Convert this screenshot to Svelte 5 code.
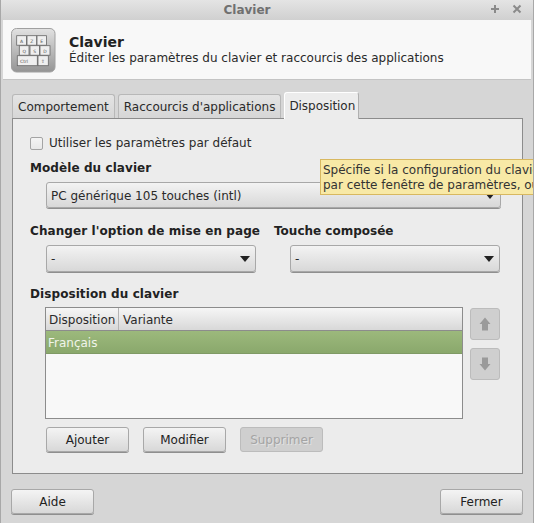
<script>
  const tabs = [
    { label: 'Comportement', active: false },
    { label: "Raccourcis d'applications", active: false },
    { label: 'Disposition', active: true }
  ];
</script>

<div class="window">
  <div class="titlebar">
    <span class="title">Clavier</span>
    <div class="wm">
      <svg width="10" height="10" viewBox="0 0 10 10"><path d="M5 1v8M1 5h8" stroke="#8a8a8a" stroke-width="2"/></svg>
      <svg width="10" height="10" viewBox="0 0 10 10"><path d="M1.5 1.5l7 7M8.5 1.5l-7 7" stroke="#8a8a8a" stroke-width="2"/></svg>
    </div>
  </div>

  <div class="content">
    <header class="banner">
      <svg class="kbd" width="45" height="45" viewBox="0 0 45 45">
        <defs>
          <linearGradient id="kb" x1="0" y1="0" x2="0" y2="1">
            <stop offset="0" stop-color="#e2e2e2"/><stop offset="1" stop-color="#949494"/>
          </linearGradient>
        </defs>
        <rect x="0.5" y="0.5" width="43.500" height="43.500" rx="5" fill="url(#kb)" stroke="#a0a0a0"/>
        <g fill="#efefef" stroke="#666" stroke-width="0.8">
          <rect x="5.700" y="7.700" width="9.700" height="9.500"/><rect x="16" y="7.700" width="9.700" height="9.500"/><rect x="26" y="7.700" width="9.500" height="9.500"/>
          <rect x="8.300" y="17.700" width="9.700" height="9.500"/><rect x="19" y="17.700" width="9.500" height="9.500"/><rect x="29" y="17.700" width="10" height="9.500"/>
          <rect x="6.300" y="27.700" width="20" height="10"/><rect x="27" y="27.700" width="10.300" height="10"/>
        </g>
        <g font-family="DejaVu Sans" font-size="4.500" fill="#555" text-anchor="middle">
          <text x="10.500" y="14.500">A</text><text x="20.800" y="14.500">Z</text><text x="30.700" y="14.500">E</text>
          <text x="13.200" y="24.500">Q</text><text x="23.700" y="24.500">S</text><text x="34" y="24.500">D</text>
          <text x="13" y="34.500">Ctrl</text><text x="32" y="34.500">⇧</text>
        </g>
      </svg>
      <div class="banner-text">
        <div class="banner-title">Clavier</div>
        <div class="banner-sub">Éditer les paramètres du clavier et raccourcis des applications</div>
      </div>
    </header>

    <div class="body">
      <div class="tabs">
        {#each tabs as t}
          <div class="tab" class:active={t.active}>{t.label}</div>
        {/each}
      </div>

      <section class="panel">
        <label class="check"><span class="box"></span>Utiliser les paramètres par défaut</label>

        <div class="heading h-model">Modèle du clavier</div>
        <div class="combo full">
          <span>PC générique 105 touches (intl)</span><i class="arrow"></i>
        </div>

        <div class="two">
          <div class="heading">Changer l'option de mise en page</div>
          <div class="heading touche">Touche composée</div>
          <div class="combo c1"><span>-</span><i class="arrow"></i></div>
          <div class="combo c2"><span>-</span><i class="arrow"></i></div>
        </div>

        <div class="heading h-layout">Disposition du clavier</div>
        <div class="layout-row">
          <div class="tree">
            <div class="thead">
              <div class="th first">Disposition</div>
              <div class="th">Variante</div>
            </div>
            <div class="selected">Français</div>
          </div>
          <div class="arrows">
            <button class="btn iconbtn" disabled aria-label="Monter">
              <svg width="16" height="16" viewBox="0 0 16 16"><path d="M8 1.500l5.500 6.500H11v6.500H5V8H2.500z" fill="#9a9a9a"/></svg>
            </button>
            <button class="btn iconbtn" disabled aria-label="Descendre">
              <svg width="16" height="16" viewBox="0 0 16 16"><path d="M8 14.500l5.500-6.500H11V1.500H5V8H2.500z" fill="#9a9a9a"/></svg>
            </button>
          </div>
        </div>

        <div class="actions">
          <button class="btn">Ajouter</button>
          <button class="btn">Modifier</button>
          <button class="btn" disabled>Supprimer</button>
        </div>
      </section>

      <footer class="footer">
        <button class="btn">Aide</button>
        <button class="btn">Fermer</button>
      </footer>
    </div>
  </div>

  <div class="tooltip">Spécifie si la configuration du clavier sera gérée<br>par cette fenêtre de paramètres, ou</div>
</div>

<style>
  :global(body) { margin: 0; }
  .window {
    position: relative;
    width: 534px;
    height: 523px;
    overflow: hidden;
    box-sizing: border-box;
    background: #d6d6d6;
    font-family: "DejaVu Sans", sans-serif;
    font-size: 12px;
    color: #2a2a2a;
    border-left: 1px solid #a8a8a8;
    border-right: 1px solid #a8a8a8;
  }
  .titlebar {
    height: 20px;
    display: flex;
    align-items: center;
    justify-content: center;
    position: relative;
    box-sizing: border-box;
    padding-right: 40px;
    background: linear-gradient(#e4e4e4, #d0d0d0);
  }
  .title { font-weight: bold; font-size: 12px; color: #707070; }
  .wm { position: absolute; right: 11px; top: 4px; display: flex; gap: 12px; }
  .content { padding: 0 2px; }
  .banner {
    height: 60px;
    box-sizing: border-box;
    background: #f8f8f8;
    border-bottom: 1px solid #c4c4c4;
    display: flex;
    align-items: center;
    gap: 13px;
    padding: 2px 0 0 8px;
  }
  .kbd { flex: none; }
  .banner-text { display: flex; flex-direction: column; gap: 1px; margin-top: -3px; }
  .banner-title { font-weight: bold; font-size: 14px; color: #222; }
  .banner-sub { font-size: 12px; }
  .body { padding: 12px 8px 0 9px; }
  .tabs { display: flex; gap: 3px; align-items: flex-end; height: 27px; position: relative; z-index: 1; margin-bottom: -1px; }
  .tab {
    height: 24px;
    box-sizing: border-box;
    padding: 5px 5px 0;
    border: 1px solid #b8b8b8;
    border-bottom: none;
    border-radius: 3px 3px 0 0;
    background: linear-gradient(#e4e4e4, #d6d6d6);
    margin-bottom: 1px;
  }
  .tab.active {
    height: 27px;
    width: 75px;
    margin-bottom: 0;
    background: #ececec;
    padding: 6px 0 0 4px;
    border-color: #fff #b0b0b0 transparent #fff;
    letter-spacing: -0.05px;
  }
  .panel {
    height: 356px;
    box-sizing: border-box;
    background: #ececec;
    border: 1px solid #8c8c8c;
    padding: 16px 21px 0 17px;
  }
  .check { display: flex; align-items: center; gap: 6px; height: 15px; }
  .box {
    box-sizing: border-box;
    width: 13px; height: 13px;
    margin-top: 2px;
    border: 1px solid #a4a4a4;
    border-radius: 2px;
    background: linear-gradient(#f4f4f4, #e8e8e8);
    display: block;
  }
  .heading { font-weight: bold; font-size: 12px; color: #222; line-height: 15px; white-space: nowrap; letter-spacing: 0.08px; }
  .heading.touche { letter-spacing: 0; }
  .h-model { margin-top: 11px; }
  .h-layout { margin-top: 15px; }
  .combo {
    box-sizing: border-box;
    height: 27px;
    border: 1px solid #a8a8a8;
    border-radius: 3px;
    background: linear-gradient(#f3f3f3, #d8d8d8);
    box-shadow: 0 1px 0 #8f8f8f;
    display: flex;
    align-items: center;
    justify-content: space-between;
    padding: 1px 5px 0 4px;
  }
  .combo.full { margin: 6px 0 0 16px; height: 26px; }
  .arrow {
    width: 0; height: 0;
    border-left: 5px solid transparent;
    border-right: 5px solid transparent;
    border-top: 6px solid #222;
    display: block;
  }
  .two {
    display: grid;
    grid-template-columns: 227px 210px;
    grid-template-rows: 15px 27px;
    row-gap: 6px;
    column-gap: 17px;
    margin-top: 16px;
  }
  .c1 { margin-left: 16px; width: 210px; }
  .c2 { margin-left: 16px; width: 210px; }
  .layout-row { display: flex; margin: 5px 0 0 15px; }
  .tree {
    width: 418px;
    height: 112px;
    box-sizing: border-box;
    background: #f8f8f8;
    border: 1px solid #8c8c8c;
    flex: none;
  }
  .thead {
    display: flex;
    height: 23px;
    box-sizing: border-box;
    background: linear-gradient(#f6f6f6, #d8d8d8);
    border-bottom: 1px solid #8c8c8c;
    align-items: stretch;
  }
  .th { padding: 5px 4px 0; }
  .th.first { width: 73px; padding-left: 3px; box-sizing: border-box; border-right: 1px solid #b4b4b4; }
  .selected {
    height: 23px;
    box-sizing: border-box;
    padding: 5px 4px 0 2px;
    color: #f0f4ea;
    background: linear-gradient(#9cb97c, #8aa86c);
    border-bottom: 1px solid #7f9a65;
  }
  .arrows { display: flex; flex-direction: column; gap: 8px; margin: 1px 0 0 7px; }
  .btn {
    box-sizing: border-box;
    width: 83px;
    height: 25px;
    padding: 0;
    border: 1px solid #a8a8a8;
    border-radius: 3px;
    background: linear-gradient(#f4f4f4, #d8d8d8);
    box-shadow: 0 1px 0 #8f8f8f;
    font: inherit;
    color: #222;
  }
  .btn:disabled {
    background: #cfcfcf;
    color: #a4a4a4;
    box-shadow: none;
    border-color: #bcbcbc;
    text-shadow: 1px 1px 0 #e2e2e2;
  }
  .iconbtn {
    width: 30px; height: 32px;
    display: flex; align-items: center; justify-content: center;
  }
  .actions { display: flex; gap: 14px; margin: 8px 0 0 16px; }
  .footer {
    display: flex;
    justify-content: space-between;
    margin: 15px 0 0 -1px;
  }
  .tooltip {
    position: absolute;
    left: 319px;
    top: 159px;
    width: 260px;
    height: 36px;
    box-sizing: border-box;
    padding: 3px 2px;
    background: #f8e9a6;
    border: 1px solid #d8b860;
    line-height: 15px;
    white-space: nowrap;
    color: #333;
  }
</style>
